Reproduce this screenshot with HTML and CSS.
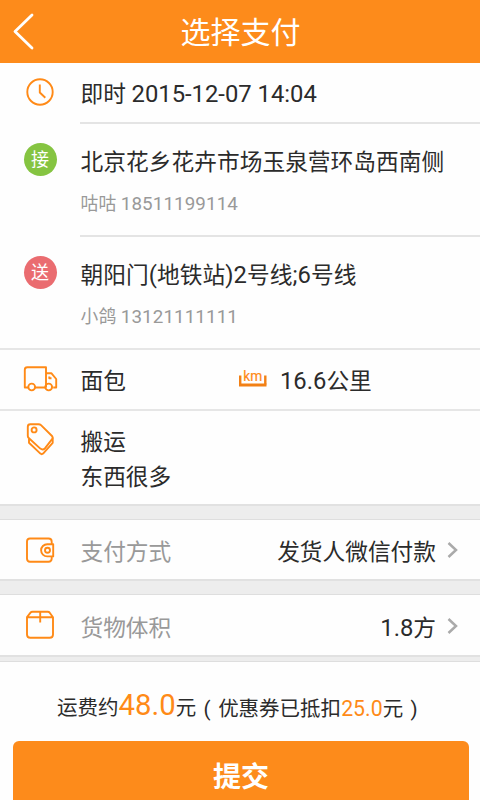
FILE: index.html
```html
<!DOCTYPE html>
<html lang="zh-CN">
<head>
<meta charset="utf-8">
<title>选择支付</title>
<link rel="stylesheet" href="styles.css">
</head>
<body>
<header class="bar">
  <svg class="back" width="24" height="38" viewBox="0 0 24 38"><path d="M21 3 4 19.500 21 36"/></svg>
  <h1>选择支付</h1>
</header>
<main>
  <section class="row time">
    <div class="icon"><svg width="32" height="32" viewBox="0 0 32 32"><circle cx="16" cy="16" r="12.700"/><path d="M15.800 8.500v8l5.500 5.200"/></svg></div>
    <div class="body line"><p>即时 <span class="num">2015-12-07 14:04</span></p></div>
  </section>
  <section class="row place">
    <div class="icon"><span class="dot green">接</span></div>
    <div class="body line"><p class="from">北京花乡花卉市场玉泉营环岛西南侧</p><p class="sub">咕咕 <span class="phone">18511199114</span></p></div>
  </section>
  <section class="row place last">
    <div class="icon"><span class="dot red">送</span></div>
    <div class="body"><p class="from">朝阳门<span class="num">(</span>地铁站<span class="num">)2</span>号线<span class="num">;6</span>号线</p><p class="sub">小鸽 <span class="phone">13121111111</span></p></div>
  </section>
  <section class="row car">
    <div class="icon"><svg width="36" height="30" viewBox="0 0 36 30"><path d="M6 23.500H2.800V5.700Q2.800 3.200 5.300 3.200H24V23.500M12.500 23.500H23M24 9.200h5.300L34.200 15v8.500h-3"/><path d="M27.300 12.500v1.700h2.200"/><circle cx="9.700" cy="23" r="3.400"/><circle cx="26.700" cy="23" r="3.400"/></svg></div>
    <div class="body"><p class="kind">面包</p>
      <svg class="km" width="28" height="20" viewBox="0 0 28 20"><path class="ruler-side" d="M1.200 6.500v9M26.300 6.500v9"/><path class="ruler" d="M0 16h27.500"/><text x="4.300" y="12.300" textLength="19" lengthAdjust="spacingAndGlyphs">km</text></svg>
      <p><span class="num">16.6</span>公里</p></div>
  </section>
  <section class="row goods">
    <div class="icon"><svg width="32" height="36" viewBox="0 0 32 36"><path d="M6.300 2.200h8.200q1.500 0 2.500 1L28 14q1.300 1.300.3 2.800l-7.200 9.400q-2.300 2.200-4.800.4L5 16.300q-1.200-1-1.200-2.300V4.700q0-2.500 2.500-2.500Z"/><circle cx="10.100" cy="7.900" r="2.500"/><path d="M5 16.500v4.300l11.400 10.800q1.300 1.100 2.700 0l9.600-10.800v-5"/></svg></div>
    <div class="body"><p>搬运</p><p>东西很多</p></div>
  </section>
  <div class="gap"></div>
  <section class="row option pay">
    <div class="icon"><svg width="32" height="32" viewBox="0 0 32 32"><path d="M27.700 9.300V7.700q0-3.200-3.200-3.200H6q-3 0-3 3v17q0 3.200 3 3.200h18.500q3.200 0 3.200-3.200v-1.700M29.200 10.200h-6a6.100 6.100 0 0 0 0 12.200h6Z"/><circle cx="23.500" cy="16.200" r="2.500"/></svg></div>
    <div class="body"><p class="label">支付方式</p><p>发货人微信付款</p><svg class="chev" width="12" height="18" viewBox="0 0 12 18"><path d="M1.500 2l7.500 7-7.500 7"/></svg></div>
  </section>
  <div class="gap"></div>
  <section class="row option">
    <div class="icon"><svg width="32" height="32" viewBox="0 0 32 32"><path d="M3 8.200 6.500 3.700q.7-.9 2-.9h15.200q1.300 0 2 .9l3.300 4.500v17.300q0 3.300-3.300 3.300H6.300Q3 28.800 3 25.500ZM3 8.200h26M16.200 3v10.500"/></svg></div>
    <div class="body"><p class="label">货物体积</p><p><span class="num">1.8</span>方</p><svg class="chev" width="12" height="18" viewBox="0 0 12 18"><path d="M1.500 2l7.500 7-7.500 7"/></svg></div>
  </section>
  <div class="gap thin"></div>
  <footer>
    <p class="fee"><span class="total">运费约<b>48.0</b>元</span><span class="coupon"><i>(</i>优惠券已抵扣<em>25.0</em>元<i>)</i></span></p>
    <button type="button">提交</button>
  </footer>
</main>
</body>
</html>
```
FILE: styles.css
```css
* { box-sizing: border-box; margin: 0; padding: 0; }
html { height: 100%; overflow: hidden; }
body {
  width: 480px;
  height: 800px;
  overflow: hidden;
  background: #fefefe;
  color: #2b2b2b;
  font: 22.7px/34px Roboto, "Noto Sans CJK SC", sans-serif;
}
p { white-space: nowrap; }
svg { display: block; fill: none; stroke: #ff8a17; stroke-width: 1.9; stroke-linejoin: round; }
.bar {
  display: grid;
  grid-template-columns: 80px 1fr 80px;
  align-items: center;
  height: 63px;
  background: #fd8b1b;
  color: #fff;
}
.bar h1 { padding: 3px 0 0 1px; font-size: 30px; font-weight: 400; line-height: 60px; text-align: center; }
.back { margin: -2px 0 0 11px; stroke: #fff; stroke-width: 2.8; stroke-linecap: round; }
.row { display: grid; grid-template-columns: 80px 1fr; }
.icon { display: flex; justify-content: center; align-items: flex-start; }
.body { min-width: 0; padding-left: 0.5px; }
.line { border-bottom: 2px solid #e4e4e4; }
.num { font-size: 23.8px; line-height: 1; }
.time { height: 61px; }
.time .icon { padding-top: 13px; }
.time .body { padding-top: 15px; }
.place { height: 113px; }
.last { height: 111px; }
.place .body { padding-top: 22px; }
.place .icon { padding-top: 19px; }
.from { letter-spacing: 0.05px; }
.sub { margin-top: 7px; font-size: 17.8px; color: #999; letter-spacing: 0.1px; }
.phone { font-size: 18.8px; line-height: 1; letter-spacing: 0.1px; }
.dot {
  width: 33px;
  height: 33px;
  border-radius: 50%;
  color: #fff;
  font-size: 18px;
  line-height: 34px;
  text-align: center;
}
.green { background: #85c441; }
.red { background: #ea6c70; }
.car { height: 61px; border-top: 2px solid #e6e6e6; }
.car .icon { padding-top: 14px; }
.car .body { display: flex; align-items: flex-start; padding-top: 15px; }
.kind { width: 158.5px; }
.km { margin: 4px 13px 0 0; }
.km path { stroke: #f28015; }
.km .ruler { stroke-width: 3; }
.km .ruler-side { stroke-width: 2.4; }
.km text { fill: #ff8a17; stroke: #ff8a17; stroke-width: 0.2; font: 14.5px Roboto, sans-serif; }
.goods { height: 95px; border-top: 2px solid #e6e6e6; }
.goods .icon { padding-top: 11px; }
.goods .body { padding-top: 14px; line-height: 35px; }
.gap { height: 16px; background: #ededed; border-top: 2px solid #e1e1e1; border-bottom: 1px solid #dedede; }
.thin { height: 7px; }
.option { height: 60px; }
.pay { height: 59px; }
.option .icon { padding-top: 14px; }
.option .body { display: flex; align-items: center; padding: 7px 21px 0 0.5px; }
.label { margin-right: auto; color: #999; }
.chev { margin: -6px 0 0 11px; stroke: #aaa; stroke-width: 2.5; stroke-linejoin: miter; }
footer { padding: 23px 11px 0 13px; }
.fee { display: flex; height: 56px; padding-left: 44px; line-height: 40px; }
.total { font-size: 20.5px; }
.total b { font-size: 29.3px; font-weight: 400; color: #ff8a17; }
.coupon { padding-top: 4px; font-size: 20.5px; }
.coupon em { font-size: 21.3px; font-style: normal; line-height: 1; color: #ff8a17; }
.coupon i { display: inline-block; width: 22px; font-style: normal; text-align: center; }
button {
  display: block;
  width: 456px;
  height: 70px;
  border: 0;
  border-radius: 6px;
  background: #fd8b1b;
  color: #fff;
  font: bold 28px/73px Roboto, "Noto Sans CJK SC", sans-serif;
}
```
